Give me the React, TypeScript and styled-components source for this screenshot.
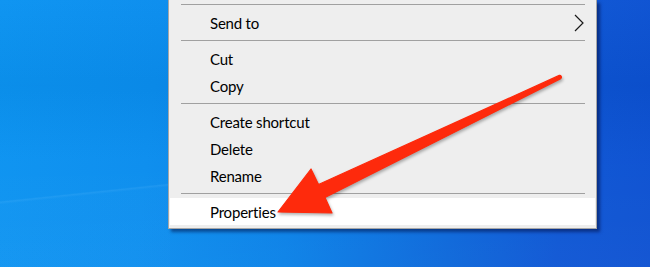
import React, {FC} from 'react';
import styled, {createGlobalStyle} from "styled-components";

const GlobalStyle = createGlobalStyle`
  html, body {
    margin: 0;
    padding: 0;
    overflow: hidden;
  }
  body {
    font-family: Lato, "Noto Sans", "Liberation Sans", sans-serif;
  }
`

type ItemType = { label: string, hasSubmenu?: boolean, active?: boolean }
type GroupType = ItemType[]

const groups: GroupType[] = [
    [{label: 'Send to', hasSubmenu: true}],
    [{label: 'Cut'}, {label: 'Copy'}],
    [{label: 'Create shortcut'}, {label: 'Delete'}, {label: 'Rename'}],
    [{label: 'Properties', active: true}],
]

const Chevron = () => (
    <svg width="10" height="18" viewBox="0 0 10 18">
        <polyline points="1,1 9,9 1,17" fill="none" stroke="#1a1a1a" strokeWidth="1.2"/>
    </svg>
)

const Arrow = () => (
    <StArrow width="650" height="267" viewBox="0 0 650 267">
        <path
            d="M559.3 75.4 L318.5 184.5 L311 169 L278 212 L332 213 L325 197.5 L560.7 78.6
               A1.8 1.8 0 0 0 559.3 75.4 Z"
            fill="#fe2a0c"
            stroke="#fe2a0c"
            strokeWidth="1.2"
            strokeLinejoin="round"
        />
    </StArrow>
)

export const ContextMenu: FC = () => {
    return (
        <StMenu>
            {groups.map((group, i) => (
                <React.Fragment key={i}>
                    <Separator/>
                    {group.map(item => (
                        <Item key={item.label} active={item.active}>
                            <span>{item.label}</span>
                            {item.hasSubmenu && <Chevron/>}
                        </Item>
                    ))}
                </React.Fragment>
            ))}
        </StMenu>
    )
}

const App: FC = () => {
    return (
        <>
            <GlobalStyle/>
            <Desktop>
                <ContextMenu/>
                <Arrow/>
            </Desktop>
        </>
    );
};

export default App

const Desktop = styled.div`
  position: relative;
  display: flex;
  align-items: flex-start;
  width: 650px;
  height: 267px;
  padding-left: 168px;
  box-sizing: border-box;
  overflow: hidden;
  background:
    linear-gradient(174deg, transparent 70.5%, rgba(120, 200, 255, 0.14) 71%, rgba(60, 170, 250, 0.05) 71.8%, rgba(60, 170, 250, 0.04) 100%) 0 0 / 170px 100% no-repeat,
    linear-gradient(180deg, rgba(255, 255, 255, 0.02) 0%, rgba(0, 0, 0, 0.03) 32%, rgba(255, 255, 255, 0.02) 60%, rgba(255, 255, 255, 0.04) 100%),
    linear-gradient(96deg, #0b93f1 0%, #0a8dee 24%, #0880e7 46%, #0a66da 70%, #0c55d4 86%, #0c50d1 100%);
`

const StMenu = styled.div`
  display: flex;
  flex-direction: column;
  width: 429px;
  box-sizing: border-box;
  padding: 0 1px 3px;
  background: #eeeeee;
  border: 1px solid #a6a6a6;
  border-top: none;
  box-shadow: 3px 3px 3px rgba(0, 10, 60, 0.5);
`

const Separator = styled.div`
  height: 9px;
  display: flex;
  align-items: center;
  padding: 0 10px 0 11px;
  &::after {
    content: '';
    flex: 1;
    height: 1px;
    background: #a0a0a0;
  }
`

const Item = styled.div<{ active?: boolean }>`
  display: flex;
  align-items: center;
  justify-content: space-between;
  height: 27px;
  padding: 0 11px 0 40px;
  background: ${p => p.active ? '#ffffff' : 'transparent'};
  color: #000;
  font-size: 15px;
  letter-spacing: -0.2px;
  line-height: 27px;
  & span {
    padding-top: 1px;
  }
  & svg {
    display: block;
  }
`

const StArrow = styled.svg`
  position: absolute;
  left: 0;
  top: 0;
  pointer-events: none;
  filter: drop-shadow(1px 2px 1.5px rgba(0, 0, 0, 0.3));
`
